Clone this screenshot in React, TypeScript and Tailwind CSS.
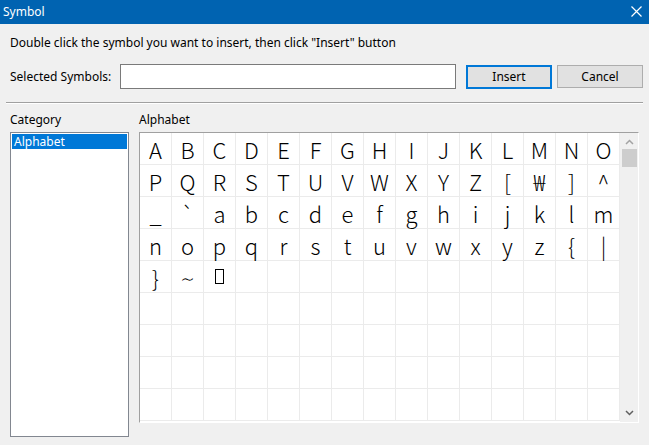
import React from 'react';

const rows: string[][] = [
  ['A', 'B', 'C', 'D', 'E', 'F', 'G', 'H', 'I', 'J', 'K', 'L', 'M', 'N', 'O'],
  ['P', 'Q', 'R', 'S', 'T', 'U', 'V', 'W', 'X', 'Y', 'Z', '[', '₩', ']', '^'],
  ['_', '`', 'a', 'b', 'c', 'd', 'e', 'f', 'g', 'h', 'i', 'j', 'k', 'l', 'm'],
  ['n', 'o', 'p', 'q', 'r', 's', 't', 'u', 'v', 'w', 'x', 'y', 'z', '{', '|'],
  ['}', '∼', '#tofu'],
];

const ui = "font-['Noto_Sans','Liberation_Sans',sans-serif] text-[12px] text-black";

function Cell({ ch }: { ch?: string }) {
  return (
    <div className="w-[32px] h-[32px] border-r border-b border-[#ebebeb] flex items-center justify-center font-['Noto_Sans_CJK_KR','DejaVu_Sans',sans-serif] font-light text-[22px] leading-none text-black">
      {ch === '#tofu' ? <span className="block w-[9px] h-[15px] border border-black" /> : ch}
    </div>
  );
}

export default function App() {
  const grid: (string | undefined)[][] = [];
  for (let r = 0; r < 9; r++) {
    const row: (string | undefined)[] = [];
    for (let c = 0; c < 15; c++) row.push(rows[r]?.[c]);
    grid.push(row);
  }

  return (
    <div className={`w-[649px] h-[445px] bg-[#f0f0f0] flex flex-col overflow-hidden ${ui}`}>
      {/* title bar */}
      <div className="h-[24px] bg-[#0063b1] flex items-center justify-between pl-[3px] pr-[7px] text-white">
        <span className="text-[12px] leading-none">Symbol</span>
        <svg width="11" height="11" viewBox="0 0 11 11" className="mt-[-2px]">
          <path d="M0.5 0.5 L10.5 10.5 M10.5 0.5 L0.5 10.5" stroke="white" strokeWidth="1.2" />
        </svg>
      </div>

      <div className="pl-[10px] pt-[11px] leading-[16px]">
        Double click the symbol you want to insert, then click "Insert" button
      </div>

      <div className="flex items-center pl-[10px] pt-[13px] h-[38px]">
        <span className="w-[110px]">Selected Symbols:</span>
        <div className="w-[336px] h-[25px] bg-white border border-[#7a7a7a]" />
        <button className="ml-[10px] w-[86px] h-[24px] bg-[#e1e1e1] border-2 border-[#0078d7] leading-none">
          Insert
        </button>
        <button className="ml-[5px] w-[86px] h-[23px] bg-[#e1e1e1] border border-[#adadad] leading-none">
          Cancel
        </button>
      </div>

      <div className="mx-[6px] mt-[13px] h-[1px] bg-[#a0a0a0] border-b border-white box-content" />

      <div className="flex pl-[10px] pt-[8px]">
        <div className="flex flex-col w-[119px]">
          <span className="leading-[16px] mb-[4px]">Category</span>
          <div className="h-[305px] bg-white border border-[#828790] p-[1px]">
            <div className="h-[15px] bg-[#0078d7] text-white leading-[15px] pl-[2px]">Alphabet</div>
          </div>
        </div>

        <div className="flex flex-col ml-[10px]">
          <span className="leading-[16px] mb-[4px]">Alphabet</span>
          <div className="flex w-[500px] h-[291px] bg-white border-l border-t border-[#a0a0a0] border-r border-r-white border-b border-b-white">
            <div className="flex flex-col">
              {grid.map((row, i) => (
                <div key={i} className="flex">
                  {row.map((ch, j) => (
                    <Cell key={j} ch={ch} />
                  ))}
                </div>
              ))}
            </div>
            <div className="flex-1 bg-[#f0f0f0] flex flex-col items-center">
              <svg width="9" height="6" viewBox="0 0 9 6" className="mt-[6px]">
                <path d="M1 5 L4.5 1.5 L8 5" stroke="#a3a3a3" strokeWidth="1.5" fill="none" />
              </svg>
              <div className="mt-[4px] w-[15px] h-[18px] bg-[#cdcdcd]" />
              <div className="flex-1" />
              <svg width="9" height="6" viewBox="0 0 9 6" className="mb-[6px]">
                <path d="M1 1 L4.5 4.5 L8 1" stroke="#606060" strokeWidth="1.5" fill="none" />
              </svg>
            </div>
          </div>
        </div>
      </div>
    </div>
  );
}
